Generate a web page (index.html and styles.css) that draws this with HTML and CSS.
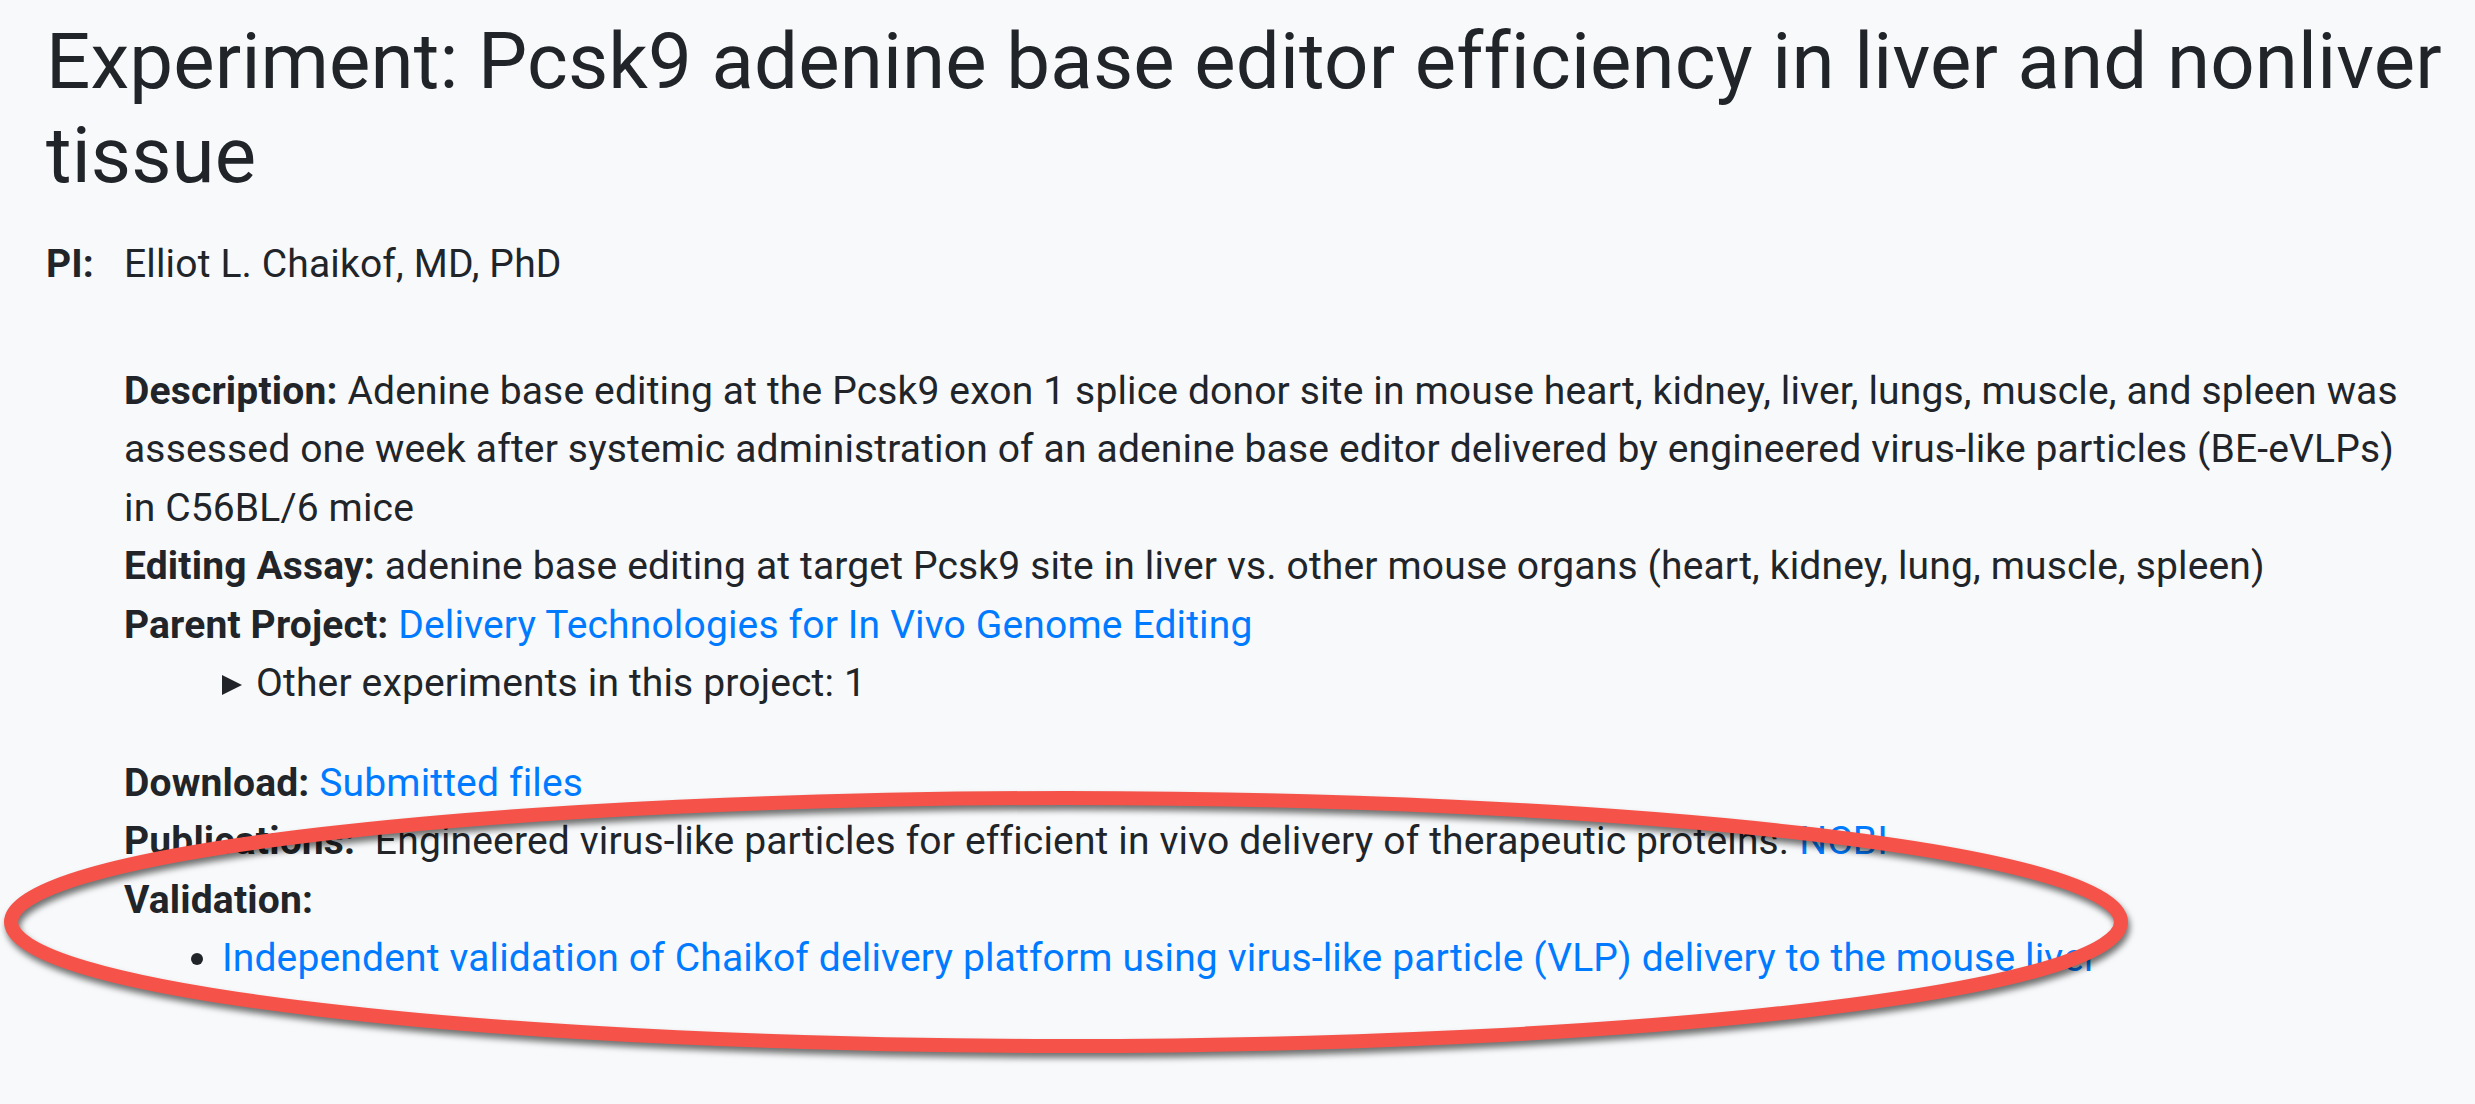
FILE: index.html
```html
<!DOCTYPE html>
<html lang="en">
<head>
<meta charset="utf-8">
<title>Experiment: Pcsk9 adenine base editor efficiency in liver and nonliver tissue</title>
<link rel="stylesheet" href="styles.css">
</head>
<body>
<main class="page">
  <h1 class="title">Experiment: Pcsk9 adenine base editor efficiency in liver and nonliver tissue</h1>

  <div class="pi">
    <span class="pi-label">PI:</span>
    <span class="pi-name">Elliot L. Chaikof, MD, PhD</span>
  </div>

  <section class="details">
    <div class="group">
      <p class="row"><span class="label">Description:</span> Adenine base editing at the Pcsk9 exon 1 splice donor site in mouse heart, kidney, liver, lungs, muscle, and spleen was assessed one week after systemic administration of an adenine base editor delivered by engineered virus-like particles (BE-eVLPs) in C56BL/6 mice</p>
      <p class="row"><span class="label">Editing Assay:</span> adenine base editing at target Pcsk9 site in liver vs. other mouse organs (heart, kidney, lung, muscle, spleen)</p>
      <p class="row"><span class="label">Parent Project:</span> <a href="#">Delivery Technologies for In Vivo Genome Editing</a></p>
      <details class="others">
        <summary>Other experiments in this project: 1</summary>
      </details>
    </div>

    <div class="group">
      <p class="row"><span class="label">Download:</span> <a href="#">Submitted files</a></p>
      <p class="row"><span class="label">Publications:</span>&nbsp; Engineered virus-like particles for efficient in vivo delivery of therapeutic proteins. <a href="#">NCBI</a></p>
      <p class="row"><span class="label">Validation:</span></p>
      <ul class="validation">
        <li><a href="#">Independent validation of Chaikof delivery platform using virus-like particle (VLP) delivery to the mouse liver</a></li>
      </ul>
    </div>
  </section>

  <svg class="annotation" width="2475" height="1104" viewBox="0 0 2475 1104" aria-hidden="true">
    <ellipse class="ring" cx="1066" cy="922" rx="1055" ry="124"/>
  </svg>
</main>
</body>
</html>
```

FILE: styles.css
```css
* { box-sizing: border-box; }

html, body {
  margin: 0;
  padding: 0;
  background: #f8f9fa;
}

body {
  font-family: Roboto, "Liberation Sans", Arial, sans-serif;
  font-size: 39px;
  line-height: 58.5px;
  letter-spacing: 0.004em;
  color: #212529;
  width: 2475px;
  height: 1104px;
  overflow: hidden;
}

.page {
  position: relative;
  padding: 15px 0 0 46px;
  height: 100%;
}

.title {
  margin: 0;
  font-size: 78px;
  font-weight: 400;
  line-height: 93.6px;
  width: 2420px;
}

.pi {
  display: grid;
  grid-template-columns: 78px auto;
  margin-top: 33px;
}

.pi-label { font-weight: 700; }

.details {
  margin: 68px 0 0 78px;
  width: 2300px;
}

.group + .group { margin-top: 41px; }

.row { margin: 0; }

.label { font-weight: 700; }

a {
  color: #007bff;
  text-decoration: none;
}

.others {
  margin-left: 98px;
}

.others summary {
  list-style: none;
  display: flex;
  align-items: center;
  gap: 14px;
  cursor: pointer;
}

.others summary::-webkit-details-marker { display: none; }

.others summary::before {
  content: "";
  width: 0;
  height: 0;
  border-left: 20px solid #212529;
  border-top: 10.5px solid transparent;
  border-bottom: 10.5px solid transparent;
  margin-top: 4px;
}

.validation {
  margin: 0;
  padding-left: 98px;
}

.annotation {
  position: absolute;
  left: 0;
  top: 0;
  overflow: visible;
  pointer-events: none;
}

.ring {
  fill: none;
  stroke: #f5534a;
  stroke-width: 14;
  filter: drop-shadow(2px 5px 3px rgba(0, 0, 0, 0.55));
}
```
